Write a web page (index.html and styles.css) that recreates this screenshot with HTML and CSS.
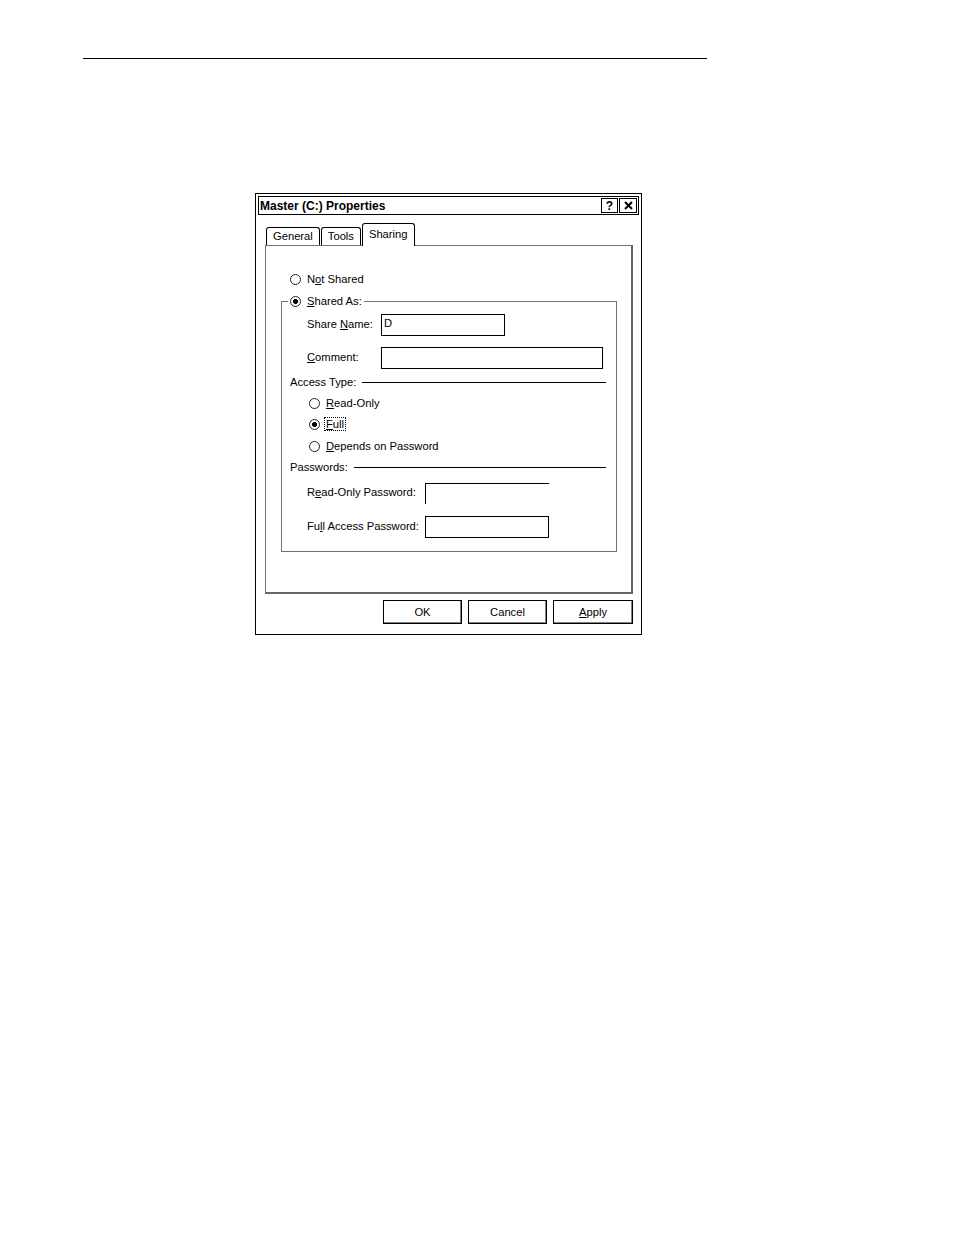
FILE: index.html
```html
<!DOCTYPE html>
<html>
<head>
<meta charset="utf-8">
<link rel="stylesheet" href="styles.css">
</head>
<body>
<div class="rule"></div>
<div class="dialog">
  <div class="titlebar">
    <span class="title">Master (C:) Properties</span>
    <span class="tbtn">?</span>
    <span class="tbtn close"><svg width="9" height="9" viewBox="0 0 9 9"><path d="M1 1L8 8M8 1L1 8" stroke="#000" stroke-width="2" fill="none"/></svg></span>
  </div>
  <div class="tabs">
    <div class="tab">General</div>
    <div class="tab">Tools</div>
    <div class="tab active">Sharing</div>
  </div>
  <div class="panel">
    <div class="opt-top"><span class="radio"></span><span>N<u>o</u>t Shared</span></div>
    <fieldset class="group">
      <legend><span class="radio on"></span><span><u>S</u>hared As:</span></legend>
      <div class="field f1"><label>Share <u>N</u>ame:</label><div class="box short">D</div></div>
      <div class="field f2"><label><u>C</u>omment:</label><div class="box long"></div></div>
      <div class="sep">Access Type:</div>
      <div class="opt"><span class="radio"></span><span><u>R</u>ead-Only</span></div>
      <div class="opt"><span class="radio on"></span><span class="focus"><u>F</u>ull</span></div>
      <div class="opt opt3"><span class="radio"></span><span><u>D</u>epends on Password</span></div>
      <div class="sep">Passwords:</div>
      <div class="field f3"><label>R<u>e</u>ad-Only Password:</label><div class="box short half"></div></div>
      <div class="field f4"><label>Fu<u>l</u>l Access Password:</label><div class="box short"></div></div>
    </fieldset>
  </div>
  <div class="buttons">
    <div class="btn">OK</div>
    <div class="btn">Cancel</div>
    <div class="btn apply"><span><u>A</u>pply</span></div>
  </div>
</div>
</body>
</html>
```

FILE: styles.css
```css
* { box-sizing: border-box; }
body {
  margin: 0;
  background: #fff;
  font-family: "Liberation Sans", Arial, sans-serif;
  font-size: 11.2px;
  color: #000;
}
u { text-underline-offset: 1px; }

.rule {
  margin: 58px 0 0 83px;
  width: 624px;
  border-top: 1px solid #000;
}

.dialog {
  margin: 134px 0 0 255px;
  width: 387px;
  height: 442px;
  border: 1px solid #000;
  display: flex;
  flex-direction: column;
}

.titlebar {
  margin: 2px 2px 0;
  height: 19px;
  border: 1px solid #000;
  display: flex;
  align-items: center;
  padding: 0 1px;
}
.title {
  flex: 1;
  font-weight: bold;
  font-size: 12px;
}
.tbtn {
  width: 17px;
  height: 15px;
  border: 1px solid #000;
  display: flex;
  align-items: center;
  justify-content: center;
  font-weight: bold;
  font-size: 12px;
}
.tbtn.close {
  width: 18px;
  margin-left: 1px;
}

.tabs {
  display: flex;
  align-items: flex-end;
  margin: 8px 0 0 10px;
  height: 22px;
}
.tab {
  height: 18px;
  padding: 0 6px 1px;
  border: 1px solid #000;
  border-bottom: 0;
  border-radius: 3px 3px 0 0;
  display: flex;
  align-items: center;
  margin-right: 1px;
  background: #fff;
}
.tab.active {
  height: 23px;
  margin-bottom: -1px;
  padding: 0 6px 2px;
  position: relative;
}

.panel {
  margin: 0 8px 0 9px;
  height: 349px;
  border: 1px solid #707070;
  border-right: 2px solid #666;
  border-bottom: 2px solid #666;
}

.radio {
  display: inline-block;
  width: 11px;
  height: 11px;
  border: 1px solid #222;
  border-radius: 50%;
  margin-right: 6px;
  flex: none;
}
.radio.on {
  background: radial-gradient(circle, #000 0 2.2px, transparent 2.8px);
}

.opt-top {
  margin: 25px 0 0 24px;
  height: 16px;
  display: flex;
  align-items: center;
}

.group {
  margin: 6px 14px 0 15px;
  padding: 0 9px 13px 0;
  border: 1px solid #707070;
  min-width: 0;
}
.group legend {
  padding: 0 2px;
  margin-left: 6px;
  height: 16px;
  display: flex;
  align-items: center;
}

.field {
  display: flex;
  align-items: center;
  padding-left: 25px;
}
.field label { width: 74px; flex: none; padding-bottom: 2px; }
.f1 { margin-top: 5px; }
.f2 { margin-top: 11px; }
.f3 { margin-top: 8px; }
.f4 { margin-top: 12px; }
.f3 label, .f4 label { width: 118px; }
.f3 label { padding-bottom: 3px; }

.box {
  height: 22px;
  border: 1px solid #000;
  padding: 1px 2px;
  line-height: 14px;
}
.box.short { width: 124px; }
.box.long { width: 222px; }
.box.half {
  height: 21px;
  border-right: 0;
  border-bottom: 0;
}

.sep {
  display: flex;
  align-items: center;
  height: 16px;
  margin-top: 5px;
  padding-left: 8px;
}
.sep::after {
  content: "";
  flex: 1;
  border-top: 1px solid #000;
  margin-left: 6px;
  margin-right: 1px;
}

.opt {
  margin-top: 5px;
  height: 16px;
  padding-left: 27px;
  display: flex;
  align-items: center;
}
.opt3 { margin-top: 6px; }
.focus {
  outline: 1px dotted #000;
  outline-offset: 0;
  padding: 0 1px;
  margin-left: -1px;
}

.buttons {
  display: flex;
  justify-content: flex-end;
  gap: 6px;
  margin: 6px 8px 0 0;
}
.btn {
  width: 79px;
  height: 24px;
  border: 1px solid #000;
  box-shadow: inset -1px -1px 0 #808080;
  display: flex;
  align-items: center;
  justify-content: center;
}
.btn.apply { width: 80px; }
```
